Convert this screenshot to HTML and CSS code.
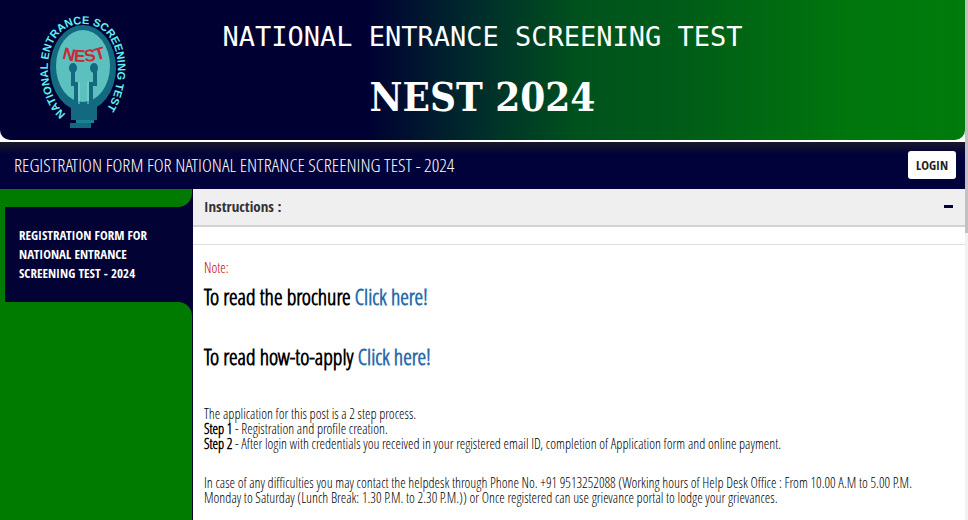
FILE: index.html
```html
<!DOCTYPE html>
<html lang="en">
<head>
<meta charset="utf-8">
<title>NEST 2024</title>
<link rel="stylesheet" href="styles.css">
</head>
<body>
<div class="page">
  <header class="banner">
    <svg class="logo" viewBox="0 0 110 130" role="img" aria-label="NEST logo">
      <defs>
        <path id="ring" d="M36 109 C10 88 9 19 53 19 C97 19 96 90 68 114"/>
        <path id="arc" d="M31 53 Q53 61 77 52"/>
      </defs>
      <path d="M41 99h26v16H41z" fill="#136a80"/>
      <path d="M46 115h18v3H46z" fill="#1b8290"/>
      <path d="M40 118h21v5H40z" fill="#136a80"/>
      <ellipse cx="53" cy="63" rx="33" ry="43" fill="#136a80"/>
      <ellipse cx="53" cy="61" rx="27" ry="36" fill="#5cc0bf"/>
      <path d="M46 101V79h-3V66M61 101V79h4V66" fill="none" stroke="#136a80" stroke-width="4"/>
      <path d="M49 77v22M58 77v22" fill="none" stroke="#8bd8d5" stroke-width="1"/>
      <ellipse cx="43" cy="63" rx="4" ry="5" fill="#136a80"/>
      <ellipse cx="64" cy="63" rx="4" ry="5" fill="#136a80"/>
      <text class="logo-name"><textPath href="#arc" startOffset="50%">NEST</textPath></text>
      <text class="logo-ring"><textPath href="#ring">NATIONAL ENTRANCE SCREENING TEST</textPath></text>
    </svg>
    <div class="titles">
      <p class="test-name">NATIONAL ENTRANCE SCREENING TEST</p>
      <h1 class="test-year">NEST 2024</h1>
    </div>
  </header>
  <div class="topbar">
    <h2 class="topbar-title">REGISTRATION FORM FOR NATIONAL ENTRANCE SCREENING TEST - 2024</h2>
    <button class="login" type="button">LOGIN</button>
  </div>
  <div class="body">
    <nav class="sidebar">
      <div class="side-top"></div>
      <a class="side-item" href="#">REGISTRATION FORM FOR NATIONAL ENTRANCE SCREENING TEST - 2024</a>
      <div class="side-rest"></div>
    </nav>
    <main class="content">
      <button class="panel-head" type="button" aria-expanded="true">
        <span>Instructions :</span><span class="minus"></span>
      </button>
      <div class="panel-gap"></div>
      <div class="panel">
        <p class="note">Note:</p>
        <p class="read">To read the brochure <a href="#">Click here!</a></p>
        <p class="read">To read how-to-apply <a href="#">Click here!</a></p>
        <p class="text">The application for this post is a 2 step process.<br><b>Step 1</b> - Registration and profile creation.<br><b>Step 2</b> - After login with credentials you received in your registered email ID, completion of Application form and online payment.</p>
        <p class="text">In case of any difficulties you may contact the helpdesk through Phone No. +91 9513252088 (Working hours of Help Desk Office : From 10.00 A.M to 5.00 P.M. Monday to Saturday (Lunch Break: 1.30 P.M. to 2.30 P.M.)) or Once registered can use grievance portal to lodge your grievances.</p>
      </div>
    </main>
  </div>
</div>
<div class="scroll"><div class="thumb"></div></div>
</body>
</html>
```
FILE: styles.css
```css
* { box-sizing: border-box; }
body {
  margin: 0;
  min-height: 100vh;
  display: flex;
  background: #fff;
  color: #000;
  font-family: "Open Sans Condensed Light", "Open Sans", sans-serif;
  font-size: 14px;
}
p, h1, h2 { margin: 0; }
.page { flex: 1; min-width: 0; display: flex; flex-direction: column; }
.banner {
  display: grid;
  grid-template-columns: 110px 1fr 110px;
  height: 140px;
  padding: 5px 30px;
  border-radius: 0 0 10px 10px;
  background: linear-gradient(90deg, #000033 0%, #000033 38%, #002b2c 49%, #00521d 60%, #005b18 70%, #00760d 88%, #007c0b 100%);
}
.logo { width: 110px; height: 130px; }
.logo-name {
  font-family: "Liberation Sans", sans-serif;
  font-weight: bold;
  font-size: 17px;
  text-anchor: middle;
  fill: #c62b38;
}
.logo-ring {
  font-family: "Liberation Sans", sans-serif;
  font-weight: bold;
  font-size: 11px;
  fill: #5ff1f4;
}
.titles { text-align: center; color: #fff; white-space: nowrap; }
.test-name {
  padding-top: 12px;
  font-family: "DejaVu Sans Mono", monospace;
  font-size: 27px;
  line-height: 40px;
}
.test-year {
  padding-top: 12px;
  font-family: "DejaVu Serif Condensed", "DejaVu Serif", serif;
  font-size: 40px;
  line-height: 56px;
}
.topbar {
  display: flex;
  align-items: center;
  justify-content: space-between;
  height: 47px;
  margin-top: 2px;
  padding: 0 9px 2px 14px;
  background: linear-gradient(#18182a, #02023a 12px);
}
.topbar-title { font-size: 19px; font-weight: 400; color: #fff; }
.login,
.side-item,
.panel-head {
  font-family: "Open Sans Condensed", "Open Sans", sans-serif;
  font-size: 13px;
  font-weight: 700;
}
.login {
  width: 48px;
  height: 28px;
  padding: 0;
  border: 0;
  border-radius: 3px;
  background: #fff;
  color: #222;
}
.body { flex: 1; display: grid; grid-template-columns: 193px 1fr; }
.sidebar { display: flex; flex-direction: column; background: #020235; padding-right: 1px; }
.side-top { height: 18px; background: #007b00; border-bottom-right-radius: 14px; }
.side-item {
  padding: 19px 24px 19px 14px;
  border-left: 5px solid #007b00;
  color: #fff;
  line-height: 19px;
  text-decoration: none;
}
.side-rest { flex: 1; background: #007b00; border-top-right-radius: 14px; }
.panel-head {
  display: flex;
  align-items: center;
  justify-content: space-between;
  width: 100%;
  height: 38px;
  padding: 0 12px 2px 11px;
  border: 0;
  border-bottom: 2px solid #d3d3d3;
  background: #f0eff0;
  color: #333;
  font-size: 15px;
}
.minus { width: 9px; height: 3px; background: #02023a; }
.panel-gap { height: 18px; border-bottom: 1px solid #ddd; }
.panel { padding: 15px 20px 0 11px; }
.note { color: #c00000; line-height: 16px; }
.read { margin: 5px 0 30px; font-size: 22px; font-weight: 600; line-height: 30px; }
.read + .read { margin-bottom: 35px; }
.read a { color: #2a6cab; text-decoration: none; }
.text { line-height: 15px; margin-bottom: 24px; }
.text + .text { margin-bottom: 0; }
.text b { font-weight: 600; }
.scroll { width: 3px; background: #f1f1f1; }
.thumb { height: 233px; background: #c1c1c1; }
```
